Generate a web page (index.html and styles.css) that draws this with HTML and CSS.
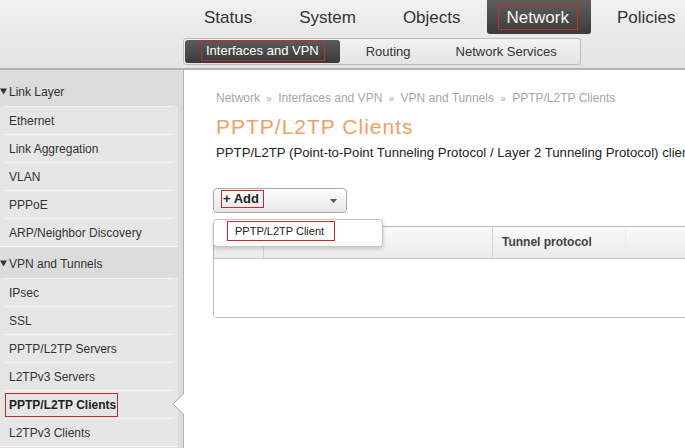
FILE: index.html
```html
<!DOCTYPE html>
<html>
<head>
<meta charset="utf-8">
<title>PPTP/L2TP Clients</title>
<link rel="stylesheet" href="styles.css">
</head>
<body>
<header class="topbar">
  <nav class="mainnav">
    <a class="tab">Status</a>
    <a class="tab">System</a>
    <a class="tab">Objects</a>
    <a class="tab active"><span class="mark">Network</span></a>
    <a class="tab">Policies</a>
  </nav>
  <nav class="subnav">
    <a class="sub active"><span class="mark">Interfaces and VPN</span></a>
    <a class="sub">Routing</a>
    <a class="sub">Network Services</a>
  </nav>
</header>
<div class="layout">
  <aside class="sidebar">
    <div class="group"><svg class="tri" width="7" height="7" viewBox="0 0 7 7"><polygon points="0,0.5 7,0.5 3.5,6.5" fill="#333"/></svg>Link Layer</div>
    <ul class="items">
      <li class="item">Ethernet</li>
      <li class="item">Link Aggregation</li>
      <li class="item">VLAN</li>
      <li class="item">PPPoE</li>
      <li class="item">ARP/Neighbor Discovery</li>
    </ul>
    <div class="group"><svg class="tri" width="7" height="7" viewBox="0 0 7 7"><polygon points="0,0.5 7,0.5 3.5,6.5" fill="#333"/></svg>VPN and Tunnels</div>
    <ul class="items">
      <li class="item">IPsec</li>
      <li class="item">SSL</li>
      <li class="item">PPTP/L2TP Servers</li>
      <li class="item">L2TPv3 Servers</li>
      <li class="item selected"><span class="mark">PPTP/L2TP Clients</span>
        <svg class="pointer" width="12" height="22" viewBox="0 0 12 22"><polygon points="12,0 0,11 12,22" fill="#fff"/><polyline points="12,0.5 0.8,11 12,21.5" fill="none" stroke="#a6a6a6"/></svg>
      </li>
      <li class="item">L2TPv3 Clients</li>
    </ul>
  </aside>
  <main class="content">
    <div class="crumbs">Network <span class="sep">»</span> Interfaces and VPN <span class="sep">»</span> VPN and Tunnels <span class="sep">»</span> PPTP/L2TP Clients</div>
    <h1 class="title">PPTP/L2TP Clients</h1>
    <p class="desc">PPTP/L2TP (Point-to-Point Tunneling Protocol / Layer 2 Tunneling Protocol) clients connect this device to remote PPTP and L2TP servers.</p>
    <div class="toolbar">
      <button class="add-btn"><span class="mark">+ Add</span><svg class="caret" width="7" height="4" viewBox="0 0 7 4"><polygon points="0,0 7,0 3.5,4" fill="#555"/></svg></button>
      <div class="menu"><span class="mark">PPTP/L2TP Client</span></div>
    </div>
    <div class="grid">
      <div class="thead">
        <div class="th"></div>
        <div class="th"></div>
        <div class="th">Tunnel protocol</div>
        <div class="th"></div>
      </div>
      <div class="tbody"></div>
    </div>
  </main>
</div>
</body>
</html>
```
FILE: styles.css
```css
html, body {
  margin: 0;
  padding: 0;
}
body {
  width: 685px;
  height: 448px;
  overflow: hidden;
  font-family: "Liberation Sans", Arial, sans-serif;
  color: #333;
  background: #fff;
}
a { text-decoration: none; color: inherit; }

.mark {
  border: 1px solid #c42a2f;
  box-sizing: border-box;
}

/* ---------- top bar ---------- */
.topbar {
  height: 68px;
  border-bottom: 2px solid #b2b2b2;
  background: linear-gradient(#f1f1f1, #e3e3e3);
  padding-left: 183px;
}
.mainnav {
  display: flex;
  gap: 5px;
  height: 34px;
}
.tab {
  padding: 1px 21px 0;
  font-size: 17px;
  line-height: 33px;
  color: #333;
}
.tab.active {
  padding: 4px 13px 0 11px;
  background: linear-gradient(#5e5e5e, #3b3b3b);
  border-radius: 0 0 3px 3px;
  color: #f4f4f4;
  box-sizing: border-box;
  height: 34px;
}
.tab.active .mark {
  display: block;
  height: 26px;
  line-height: 25px;
  padding: 0 8px;
}
.subnav {
  margin-top: 4px;
  width: 398px;
  height: 27px;
  box-sizing: border-box;
  border: 1px solid #bdbdbd;
  border-radius: 3px;
  background: linear-gradient(#f2f2f2, #e4e4e4);
  padding: 1px;
  display: flex;
}
.sub {
  font-size: 13px;
  line-height: 24px;
  padding: 0 19px 0 26px;
  color: #333;
}
.sub.active {
  padding: 0 15px 0 16px;
  background: linear-gradient(#5b5b5b, #393939);
  border-radius: 3px;
  color: #fff;
  height: 23px;
  line-height: 19px;
}
.sub.active .mark {
  display: block;
  height: 21px;
  padding: 0 5px 0 4px;
}

/* ---------- layout ---------- */
.layout {
  display: flex;
  height: 378px;
}

/* ---------- sidebar ---------- */
.sidebar {
  width: 184px;
  flex: none;
  box-sizing: border-box;
  border-right: 1px solid #b3b3b3;
  background: #dcdcdc;
  padding-top: 5px;
  font-size: 12px;
  color: #333;
}
.group {
  height: 31px;
  box-sizing: border-box;
  padding-top: 2px;
  display: flex;
  align-items: center;
}
.tri {
  margin-right: 2px;
}
.items {
  list-style: none;
  margin: 0 5px 0 0;
  padding: 0;
  background: #e6e6e6;
  border-bottom: 1px solid #f8f8f8;
}
.item {
  margin: 0 5px 0 4px;
  padding-left: 5px;
  height: 28px;
  box-sizing: border-box;
  border-top: 1px solid #f3f3f3;
  display: flex;
  align-items: center;
  position: relative;
}
.item.selected {
  font-weight: bold;
  color: #222;
}
.item.selected .mark {
  height: 24px;
  line-height: 22px;
  margin-left: -4px;
  padding: 0 1px 0 3px;
}
.pointer {
  position: absolute;
  left: 168px;
  top: 2px;
}

/* ---------- content ---------- */
.content {
  flex: 1;
  min-width: 0;
  overflow: hidden;
  padding: 20px 0 0 32px;
  position: relative;
}
.crumbs {
  font-size: 12px;
  line-height: 16px;
  color: #a6a6a6;
  white-space: nowrap;
}
.sep {
  font-size: 10px;
  margin: 0 3px;
}
.title {
  margin: 7px 0 0;
  font-size: 21px;
  line-height: 26px;
  font-weight: normal;
  letter-spacing: 1px;
  color: #f2a062;
}
.desc {
  margin: 5px 0 0;
  font-size: 13.2px;
  line-height: 16px;
  color: #222;
  white-space: nowrap;
}
.toolbar {
  margin: 27px 0 0 -3px;
  position: relative;
}
.add-btn {
  width: 134px;
  height: 25px;
  box-sizing: border-box;
  border: 1px solid #a9a9a9;
  border-radius: 4px;
  background: linear-gradient(#fdfdfd, #e8e8e8);
  display: flex;
  align-items: center;
  padding: 0 0 0 7px;
  font-family: inherit;
  cursor: pointer;
}
.add-btn .mark {
  height: 18px;
  line-height: 16px;
  padding: 0 4px 0 1px;
  font-size: 13px;
  font-weight: bold;
  color: #222;
  margin-top: -3px;
}
.caret {
  margin-left: auto;
  margin-right: 9px;
}
.menu {
  position: absolute;
  left: 0;
  top: 31px;
  width: 170px;
  height: 28px;
  box-sizing: border-box;
  background: #fff;
  border: 1px solid #c4c4c4;
  border-radius: 4px;
  box-shadow: 0 2px 4px rgba(0,0,0,0.18);
  padding: 1px 0 0 13px;
  z-index: 2;
}
.menu .mark {
  display: inline-block;
  height: 20px;
  line-height: 18px;
  padding: 0 10px 0 7px;
  font-size: 11px;
  color: #222;
}
.grid {
  margin: 13px 0 0 -3px;
  width: 720px;
  border: 1px solid #b9b9b9;
  border-radius: 4px;
  overflow: hidden;
}
.thead {
  display: grid;
  grid-template-columns: 49px 229px 133px 1fr;
  height: 32px;
  box-sizing: border-box;
  border-bottom: 1px solid #c6c6c6;
  background: linear-gradient(#fafafa, #ebebeb);
}
.th {
  border-left: 1px solid #d2d2d2;
  font-size: 12px;
  font-weight: bold;
  color: #444;
  line-height: 31px;
  padding-left: 9px;
}
.th:first-child {
  border-left: none;
}
.th:nth-child(4) {
  border-left-color: #ececec;
}
.tbody {
  height: 58px;
  background: #fff;
}
```
